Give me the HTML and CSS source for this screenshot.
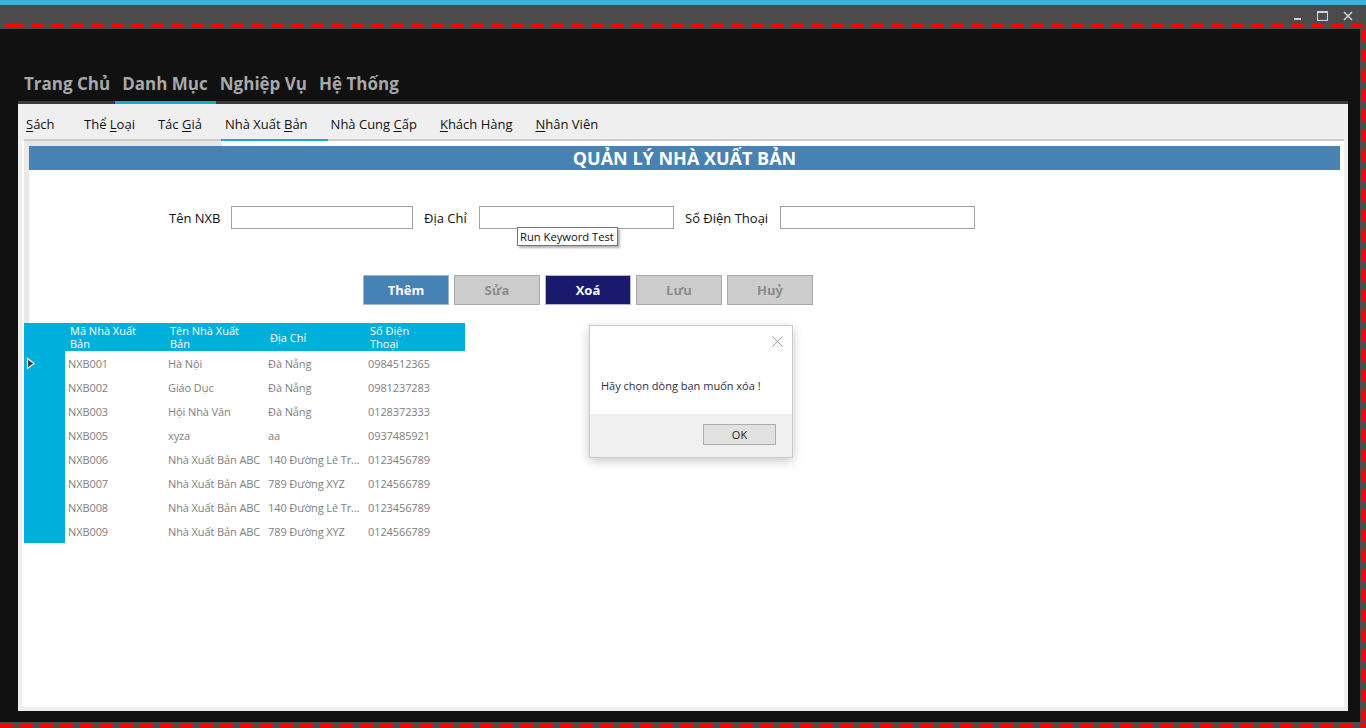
FILE: index.html
```html
<!DOCTYPE html>
<html lang="vi">
<head>
<meta charset="utf-8">
<title>Quản lý Nhà Xuất Bản</title>
<link rel="stylesheet" href="styles.css">
</head>
<body>
<div class="frame">
  <div class="accent"></div>
  <div class="titlebar">
    <span class="wc"><svg width="10" height="10" viewBox="0 0 10 10"><rect x="1" y="7" width="7" height="2" fill="#d2d2d2"/></svg></span>
    <span class="wc"><svg width="11" height="10" viewBox="0 0 11 10"><rect x="0.5" y="0.5" width="10" height="9" fill="none" stroke="#c9d4dc" stroke-width="1.2"/><rect x="0.5" y="0.5" width="10" height="1.5" fill="#c9d4dc"/></svg></span>
    <span class="wc"><svg width="10" height="10" viewBox="0 0 10 10"><path d="M1 1 L9 9 M9 1 L1 9" stroke="#cfd6dc" stroke-width="1.5"/></svg></span>
  </div>
  <div class="hdash"></div>
  <div class="main">
    <div class="workspace">
      <nav class="menubar">
        <span class="menu-item">Trang Chủ</span>
        <span class="menu-item">Danh Mục</span>
        <span class="menu-item">Nghiệp Vụ</span>
        <span class="menu-item">Hệ Thống</span>
      </nav>
      <div class="panel">
        <div class="panel-bar"><span class="panel-bar-active"></span></div>
        <div class="tabs">
          <span class="tab tab-first"><u>S</u>ách</span>
          <span class="tab">Thể <u>L</u>oại</span>
          <span class="tab">Tác <u>G</u>iả</span>
          <span class="tab">Nhà Xuất <u>B</u>ản</span>
          <span class="tab">Nhà Cung <u>C</u>ấp</span>
          <span class="tab"><u>K</u>hách Hàng</span>
          <span class="tab"><u>N</u>hân Viên</span>
        </div>
        <div class="tabline"><span class="tabline-active"></span></div>
        <div class="page">
          <div class="top-wrap">
            <div class="strip"></div>
            <h1 class="title">QUẢN LÝ NHÀ XUẤT BẢN</h1>
            <div class="form">
              <label class="lbl lbl-name">Tên NXB</label>
              <input class="in in-name" type="text">
              <label class="lbl lbl-addr">Địa Chỉ</label>
              <input class="in in-wide" type="text">
              <label class="lbl lbl-phone">Số Điện Thoại</label>
              <input class="in in-wide" type="text">
            </div>
            <div class="actions">
              <button class="btn btn-add">Thêm</button>
              <button class="btn btn-off">Sửa</button>
              <button class="btn btn-del">Xoá</button>
              <button class="btn btn-off">Lưu</button>
              <button class="btn btn-off">Huỷ</button>
            </div>
          </div>
          <div class="grid">
            <div class="gh gh-corner"></div>
            <div class="gh">Mã Nhà Xuất<br>Bản</div>
            <div class="gh">Tên Nhà Xuất<br>Bản</div>
            <div class="gh">Địa Chỉ</div>
            <div class="gh">Số Điện<br>Thoại</div>

            <div class="rh"><svg width="10" height="13" viewBox="0 0 10 13"><polygon points="1.5,1.5 8,6.5 1.5,11.5" fill="#3a3a3a" stroke="#ffffff" stroke-width="1.2"/></svg></div>
            <div class="cell">NXB001</div><div class="cell">Hà Nội</div><div class="cell">Đà Nẵng</div><div class="cell">0984512365</div>

            <div class="rh"></div>
            <div class="cell">NXB002</div><div class="cell">Giáo Dục</div><div class="cell">Đà Nẵng</div><div class="cell">0981237283</div>

            <div class="rh"></div>
            <div class="cell">NXB003</div><div class="cell">Hội Nhà Văn</div><div class="cell">Đà Nẵng</div><div class="cell">0128372333</div>

            <div class="rh"></div>
            <div class="cell">NXB005</div><div class="cell">xyza</div><div class="cell">aa</div><div class="cell">0937485921</div>

            <div class="rh"></div>
            <div class="cell">NXB006</div><div class="cell">Nhà Xuất Bản ABC</div><div class="cell">140 Đường Lê Tr...</div><div class="cell">0123456789</div>

            <div class="rh"></div>
            <div class="cell">NXB007</div><div class="cell">Nhà Xuất Bản ABC</div><div class="cell">789 Đường XYZ</div><div class="cell">0124566789</div>

            <div class="rh"></div>
            <div class="cell">NXB008</div><div class="cell">Nhà Xuất Bản ABC</div><div class="cell">140 Đường Lê Tr...</div><div class="cell">0123456789</div>

            <div class="rh"></div>
            <div class="cell">NXB009</div><div class="cell">Nhà Xuất Bản ABC</div><div class="cell">789 Đường XYZ</div><div class="cell">0124566789</div>
          </div>
        </div>
      </div>
    </div>
    <div class="vdash"></div>
  </div>
  <div class="bdash"></div>

  <div class="tooltip">Run Keyword Test</div>

  <div class="dialog">
    <div class="dlg-body">
      <div class="dlg-close"><svg width="11" height="11" viewBox="0 0 11 11"><path d="M0.5 0.5 L10.5 10.5 M10.5 0.5 L0.5 10.5" stroke="#a0a0a0" stroke-width="1"/></svg></div>
      <p class="dlg-msg">Hãy chọn dòng bạn muốn xóa !</p>
    </div>
    <div class="dlg-foot">
      <button class="dlg-ok">OK</button>
    </div>
  </div>
</div>
</body>
</html>
```

FILE: styles.css
```css
* { box-sizing: border-box; }

body {
  margin: 0;
  background: #4b4b4b;
  font-family: "Open Sans", "Noto Sans", sans-serif;
  overflow: hidden;
}

.frame {
  position: relative;
  width: 1366px;
  height: 728px;
  display: flex;
  flex-direction: column;
  background: #4b4b4b;
}

.accent { height: 5px; background: #3eb1d5; }

.titlebar {
  height: 19px;
  display: flex;
  justify-content: flex-end;
  padding-right: 6px;
}

.wc {
  width: 25px;
  height: 19px;
  display: flex;
  justify-content: center;
  align-items: flex-start;
  padding-top: 6px;
}

.hdash {
  height: 3px;
  margin-bottom: 2px;
  background-image: repeating-linear-gradient(90deg, #ff0000 0 11px, transparent 11px 20px);
  background-position: 12px 0;
}

.main { display: flex; height: 693px; }

.workspace {
  flex: 1;
  background: #111111;
  padding: 0 12px 11px 18px;
  display: flex;
  flex-direction: column;
}

.vdash {
  width: 6px;
  background-image: repeating-linear-gradient(180deg, #ff0000 0 12px, transparent 12px 20px);
  background-size: 4px 100%;
  background-repeat: no-repeat;
  background-position: 1px 0;
}

.bdash {
  height: 6px;
  background-image: repeating-linear-gradient(90deg, #ff0000 0 13px, transparent 13px 20px);
  background-size: 100% 4px;
  background-repeat: no-repeat;
  background-position: 0 1px;
}

/* menu */
.menubar {
  height: 72px;
  display: flex;
  align-items: flex-end;
  padding: 0 0 5px 1px;
  gap: 2px;
}

.menu-item {
  padding: 0 5px;
  font-size: 17px;
  line-height: 24px;
  font-weight: 700;
  color: #a8a8a8;
}

/* panel */
.panel {
  flex: 1;
  background: #efefef;
  display: flex;
  flex-direction: column;
}

.panel-bar { height: 3px; background: #3c3c3c; display: flex; }
.panel-bar-active { margin-left: 97px; width: 101px; background: #1ba6d8; }

.tabs {
  height: 35px;
  display: flex;
  align-items: center;
  padding: 4px 0 0 6px;
  font-size: 13px;
  color: #111111;
}

.tab { padding: 0 21px 0 2px; white-space: nowrap; }
.tab-first { min-width: 58px; }
.tab u { text-decoration-thickness: 1px; text-underline-offset: 2px; }

.tabline {
  height: 2px;
  margin: 0 4px 0 6px;
  background: #cccccc;
  display: flex;
}
.tabline-active { margin-left: 197px; width: 107px; background: #1ba6d8; }

.page {
  flex: 1;
  background: #ffffff;
  margin: 0 4px 4px 4px;
}

.top-wrap {
  margin-left: 2px;
  border-left: 5px solid #e8e8e8;
  padding-bottom: 18px;
}

.strip { height: 5px; width: 193px; background: #e6e6e6; }

.title {
  margin: 0 4px 0 0;
  height: 24px;
  line-height: 25px;
  background: #4682b4;
  color: #ffffff;
  text-align: center;
  font-size: 18px;
  font-weight: 700;
}

.form {
  margin-top: 36px;
  display: flex;
  align-items: center;
  padding-left: 140px;
  font-size: 13px;
  color: #111111;
}

.lbl { white-space: nowrap; }
.lbl-name { width: 62px; }
.lbl-addr { width: 55px; }
.lbl-phone { width: 95px; }

.in {
  height: 23px;
  border: 1px solid #a0a0a0;
  background: #ffffff;
  margin: 0 11px 0 0;
  padding: 0;
}
.in-name { width: 182px; }
.in-wide { width: 195px; }

.actions {
  margin-top: 46px;
  display: flex;
  gap: 5px;
  padding-left: 334px;
}

.btn {
  width: 86px;
  height: 30px;
  font-family: "Open Sans", "Noto Sans", sans-serif;
  font-size: 13px;
  font-weight: 700;
  border: 1px solid #b4b4b4;
  padding: 0;
}
.btn-add { background: #4682b4; color: #ffffff; border-color: #9fb6cc; }
.btn-del { background: #191970; color: #ffffff; border-color: #b6b6c8; }
.btn-off { background: #cccccc; color: #8c8c8c; border-color: #a9a9a9; }

/* grid */
.grid {
  margin-left: 2px;
  width: 441px;
  display: grid;
  grid-template-columns: 41px repeat(4, 100px);
  grid-template-rows: 28px;
  grid-auto-rows: 24px;
  font-size: 11px;
}

.gh {
  background: #00afdb;
  color: #ffffff;
  padding-left: 5px;
  display: flex;
  align-items: center;
  line-height: 13px;
}
.gh-corner { padding: 0; }

.rh {
  background: #00afdb;
  display: flex;
  align-items: center;
  padding-left: 2px;
}

.cell {
  color: #808080;
  padding-left: 3px;
  display: flex;
  align-items: center;
  white-space: nowrap;
  overflow: hidden;
  letter-spacing: -0.1px;
}

/* overlays */
.tooltip {
  position: absolute;
  left: 517px;
  top: 227px;
  height: 19px;
  padding: 0 3px 0 2px;
  border: 1px solid #767676;
  background: #ffffff;
  font-size: 11.2px;
  line-height: 17px;
  color: #111111;
  box-shadow: 2px 2px 2px rgba(0, 0, 0, 0.3);
}

.dialog {
  position: absolute;
  left: 589px;
  top: 325px;
  width: 204px;
  height: 133px;
  border: 1px solid #cbcbcb;
  background: #ffffff;
  box-shadow: 0 3px 10px rgba(0, 0, 0, 0.22);
  display: flex;
  flex-direction: column;
}

.dlg-body { height: 88px; padding-left: 11px; }

.dlg-close {
  display: flex;
  justify-content: flex-end;
  padding: 10px 9px 0 0;
  height: 21px;
}

.dlg-msg {
  margin: 31px 0 0 0;
  font-size: 11px;
  line-height: 16px;
  color: #2e2e3c;
}

.dlg-foot {
  flex: 1;
  background: #f0f0f0;
  display: flex;
  justify-content: flex-end;
  align-items: flex-start;
  padding: 10px 16px 0 0;
}

.dlg-ok {
  width: 73px;
  height: 21px;
  background: #e1e1e1;
  border: 1px solid #adadad;
  font-family: "Open Sans", "Noto Sans", sans-serif;
  font-size: 11px;
  color: #222222;
  padding: 0;
}
```
